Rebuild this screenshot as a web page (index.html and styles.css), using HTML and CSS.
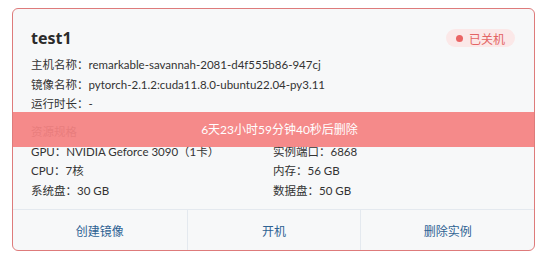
FILE: index.html
```html
<!DOCTYPE html>
<html lang="zh-CN">
<head>
    <meta charset="UTF-8">
    <title>实例</title>
    <link rel="stylesheet" href="styles.css">
</head>
<body>
    <div class="card">
        <div class="card-body">
            <div class="card-head">
                <div class="name">test1</div>
                <div class="status"><span class="dot"></span>已关机</div>
            </div>
            <div class="info">
                <div class="row">主机名称：remarkable-savannah-2081-d4f555b86-947cj</div>
                <div class="row">镜像名称：pytorch-2.1.2:cuda11.8.0-ubuntu22.04-py3.11</div>
                <div class="row">运行时长：-</div>
            </div>
            <div class="section-title">资源规格</div>
            <div class="specs">
                <div class="row">GPU：NVIDIA Geforce 3090（1卡）</div>
                <div class="row">实例端口：6868</div>
                <div class="row">CPU：7核</div>
                <div class="row">内存：56 GB</div>
                <div class="row">系统盘：30 GB</div>
                <div class="row">数据盘：50 GB</div>
            </div>
        </div>
        <div class="actions">
            <button>创建镜像</button>
            <button>开机</button>
            <button>删除实例</button>
        </div>
        <div class="countdown">6天23小时59分钟40秒后删除</div>
    </div>
</body>
</html>
```

FILE: styles.css
```css
body {
    margin: 0;
    padding: 8px 14px 0 12px;
    background: #fff;
    font-family: Lato, "Noto Sans CJK SC", sans-serif;
    color: #333;
}

.card {
    position: relative;
    width: 521px;
    height: 241px;
    border: 1px solid #de7b7b;
    border-radius: 6px;
    background: #f7f8f9;
    display: flex;
    flex-direction: column;
    overflow: hidden;
}

.card-body {
    flex: 1;
    padding: 18px 18px 0 18px;
}

.card-head {
    display: flex;
    justify-content: space-between;
    align-items: center;
    height: 22px;
    margin-bottom: 6px;
}

.name {
    font-family: "Noto Sans", sans-serif;
    font-size: 16px;
    font-weight: 700;
    color: #2b2b2b;
}

.status {
    display: flex;
    align-items: center;
    height: 18px;
    padding: 0 10px 0 10px;
    margin-right: 1px;
    border-radius: 9px;
    background: #fbe8e8;
    color: #e36464;
    font-size: 12px;
}

.dot {
    width: 7px;
    height: 7px;
    border-radius: 50%;
    background: #ea6464;
    margin-right: 6px;
}

.row {
    font-size: 11.5px;
    line-height: 19.5px;
    white-space: nowrap;
}

.section-title {
    font-size: 11.5px;
    line-height: 20px;
    margin-top: 8px;
    color: #555;
}

.specs {
    display: grid;
    grid-template-columns: 242px 1fr;
}

.actions {
    display: grid;
    grid-template-columns: repeat(3, 1fr);
    height: 40px;
    border-top: 1px solid #e4e9ef;
}

.actions button {
    border: none;
    background: none;
    font-family: inherit;
    font-size: 12px;
    color: #2e6293;
    cursor: pointer;
}

.actions button + button {
    border-left: 1px solid #e4e9ef;
}

.countdown {
    position: absolute;
    left: 0;
    right: 0;
    top: 103px;
    height: 35px;
    line-height: 35px;
    padding-left: 12px;
    text-align: center;
    background: rgba(244, 128, 128, 0.92);
    color: #fff;
    font-size: 12px;
}
```
